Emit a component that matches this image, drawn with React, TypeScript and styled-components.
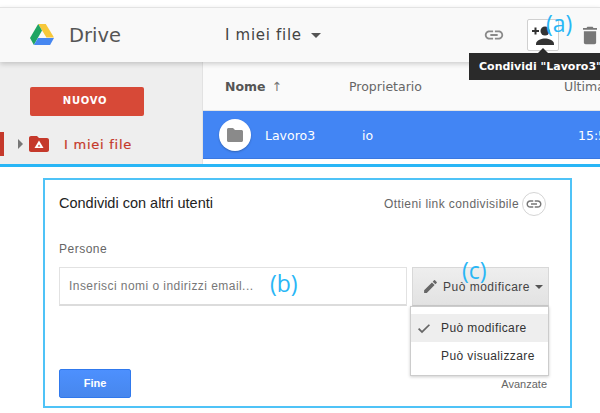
import React from "react";
import styled, { createGlobalStyle } from "styled-components";

const GlobalStyle = createGlobalStyle`
  html, body {
    margin: 0;
    padding: 0;
    background: #ffffff;
  }
  * {
    box-sizing: border-box;
  }
`;

const Page = styled.div`
  position: relative;
  width: 600px;
  height: 413px;
  overflow: hidden;
  background: #ffffff;
  font-family: "DejaVu Sans", sans-serif;
`;

const DriveShot = styled.section`
  position: relative;
  height: 164px;
  padding-top: 7px;
  overflow: hidden;
`;

const TopBar = styled.header`
  position: relative;
  z-index: 2;
  display: flex;
  align-items: center;
  height: 55px;
  padding-left: 30px;
  background: #f9f9f9;
  border-top: 1px solid #e3e3e3;
  box-shadow: 0 2px 5px rgba(0, 0, 0, 0.18);
`;

const Brand = styled.div`
  display: flex;
  align-items: center;
  gap: 15px;
  width: 195px;
  color: #555555;
  font-size: 19.5px;
`;

const FolderTitle = styled.div`
  display: flex;
  align-items: center;
  gap: 9px;
  flex: 1;
  color: #444444;
  font-size: 15px;
  letter-spacing: 0.7px;
`;

const Caret = styled.span`
  width: 0;
  height: 0;
  border-left: 5px solid transparent;
  border-right: 5px solid transparent;
  border-top: 5px solid #555555;
`;

const Tools = styled.div`
  display: flex;
  align-items: center;
  flex: none;
  width: 117px;
`;

const LinkTool = styled.div`
  display: flex;
  width: 23px;
`;

const ShareTool = styled.div`
  display: flex;
  align-items: center;
  justify-content: center;
  width: 32px;
  height: 32px;
  margin-left: 21px;
  background: #ffffff;
  border: 1px solid #d0d0d0;
  border-radius: 2px;
`;

const TrashTool = styled.div`
  display: flex;
  margin-left: 24px;
`;

const Tooltip = styled.div`
  position: absolute;
  z-index: 3;
  top: 53px;
  left: 469px;
  width: 131px;
  height: 27px;
  padding-left: 10px;
  overflow: hidden;
  background: #2a2a2a;
  color: #ffffff;
  font-size: 11px;
  font-weight: 700;
  line-height: 27px;
  white-space: nowrap;
`;

const TooltipNotch = styled.span`
  position: absolute;
  z-index: 3;
  top: 48px;
  left: 538px;
  width: 0;
  height: 0;
  border-left: 5px solid transparent;
  border-right: 5px solid transparent;
  border-bottom: 5px solid #2a2a2a;
`;

const Body = styled.div`
  display: flex;
  height: 102px;
`;

const Sidebar = styled.aside`
  flex: none;
  width: 203px;
  padding-top: 25px;
  background: #eeeeee;
  border-right: 1px solid #e2e2e2;
`;

const NewButton = styled.div`
  width: 114px;
  height: 29px;
  margin-left: 30px;
  padding-right: 4px;
  background: #d74937;
  border-radius: 2px;
  color: #ffffff;
  font-size: 10px;
  font-weight: 700;
  line-height: 28px;
  letter-spacing: 0.7px;
  text-align: center;
`;

const NavRow = styled.div`
  display: flex;
  align-items: center;
  height: 24px;
  margin-top: 16px;
  color: #c5382a;
  font-size: 13px;
  letter-spacing: 0.75px;
  -webkit-text-stroke: 0.2px #c5382a;
`;

const NavMark = styled.span`
  width: 4px;
  height: 24px;
  background: #c5392b;
`;

const NavArrow = styled.span`
  width: 0;
  height: 0;
  margin-left: 14px;
  border-top: 5px solid transparent;
  border-bottom: 5px solid transparent;
  border-left: 5px solid #777777;
`;

const NavIcon = styled.span`
  display: flex;
  margin-left: 6px;
  margin-right: 15px;
`;

const Listing = styled.main`
  flex: 1;
  min-width: 0;
  background: #ffffff;
`;

const ColumnHead = styled.div`
  display: grid;
  grid-template-columns: 124px 215px 1fr;
  align-items: center;
  height: 49px;
  padding: 0 0 0 22px;
  background: #fafafa;
  border-bottom: 1px solid #e4e4e4;
  color: #666666;
  font-size: 12.5px;
  white-space: nowrap;
`;

const NameHead = styled.span`
  display: flex;
  gap: 6px;
  color: #555555;
  font-size: 12.5px;
  font-weight: 700;
`;

const SortArrow = styled.span`
  color: #777777;
  font-weight: 400;
`;

const SelectedRow = styled.div`
  display: grid;
  grid-template-columns: 46px 97px 216px 1fr;
  align-items: center;
  height: 48px;
  padding-left: 16px;
  background: #4285f4;
  border-bottom: 1px solid #3b78e0;
  color: #ffffff;
  font-size: 12.5px;
  white-space: nowrap;
`;

const RowCell = styled.span`
  padding-top: 1px;
`;

const FolderBadge = styled.span`
  display: flex;
  align-items: center;
  justify-content: center;
  width: 32px;
  height: 32px;
  background: #ffffff;
  border-radius: 50%;
  box-shadow: 0 1px 2px rgba(0, 0, 0, 0.25);
`;

const Divider = styled.div`
  height: 3px;
  background: #29b6f6;
`;

const DialogArea = styled.section`
  padding: 11px 28px 0 43px;
`;

const Dialog = styled.div`
  display: flex;
  flex-direction: column;
  height: 230px;
  padding: 11px 24px 0 14px;
  border: 2px solid #4fc3f7;
  font-family: "Liberation Sans", Arial, sans-serif;
`;

const DialogHead = styled.div`
  display: flex;
  align-items: center;
  justify-content: space-between;
  height: 24px;
`;

const DialogTitle = styled.h2`
  margin: 0;
  color: #222222;
  font-size: 14.5px;
  font-weight: 400;
`;

const LinkAction = styled.div`
  display: flex;
  align-items: center;
  gap: 3px;
  margin-top: 2px;
  color: #666666;
  font-size: 12px;
  letter-spacing: 0.42px;
`;

const RoundIcon = styled.span`
  display: flex;
  align-items: center;
  justify-content: center;
  width: 24px;
  height: 24px;
  border: 1px solid #d5d5d5;
  border-radius: 50%;
`;

const FieldLabel = styled.div`
  margin-top: 26px;
  color: #666666;
  font-size: 12px;
  letter-spacing: 0.5px;
  line-height: 16px;
`;

const FieldRow = styled.div`
  display: flex;
  gap: 5px;
  margin-top: 10px;
`;

const PeopleInput = styled.div`
  flex: none;
  width: 348px;
  height: 39px;
  padding-left: 9px;
  background: #ffffff;
  border: 1px solid #e2e2e2;
  border-bottom: 2px solid #dcdcdc;
  color: #777777;
  font-size: 12px;
  letter-spacing: 0.45px;
  line-height: 36px;
`;

const RoleButton = styled.div`
  display: flex;
  align-items: center;
  flex: none;
  width: 137px;
  height: 39px;
  padding-left: 9px;
  background: linear-gradient(#eeeeee, #e2e2e2);
  border: 1px solid #d8d8d8;
  border-bottom-color: #cccccc;
  color: #444444;
  font-size: 12px;
  letter-spacing: 0.5px;
`;

const RoleLabel = styled.span`
  margin-left: 4px;
  margin-right: 5px;
`;

const SmallCaret = styled.span`
  width: 0;
  height: 0;
  border-left: 4px solid transparent;
  border-right: 4px solid transparent;
  border-top: 4px solid #555555;
`;

const RoleMenu = styled.ul`
  position: absolute;
  z-index: 2;
  top: 306px;
  left: 410px;
  width: 139px;
  height: 70px;
  margin: 0;
  padding: 7px 0 0;
  list-style: none;
  background: #ffffff;
  border: 1px solid #cccccc;
  box-shadow: 0 1px 3px rgba(0, 0, 0, 0.2);
  font-family: "Liberation Sans", Arial, sans-serif;
`;

const RoleOption = styled.li<{ $active?: boolean }>`
  display: flex;
  align-items: center;
  height: 28px;
  padding-left: 5px;
  background: ${(p) => (p.$active ? "#eeeeee" : "transparent")};
  color: #333333;
  font-size: 12px;
  letter-spacing: 0.4px;
`;

const CheckSlot = styled.span`
  display: flex;
  width: 25px;
`;

const DialogFoot = styled.div`
  display: flex;
  align-items: flex-end;
  justify-content: space-between;
  flex: 1;
  padding-bottom: 8px;
`;

const DoneButton = styled.div`
  width: 72px;
  height: 29px;
  background: linear-gradient(#4d90fe, #4787ed);
  border: 1px solid #3079ed;
  border-radius: 2px;
  color: #ffffff;
  font-size: 11px;
  font-weight: 700;
  line-height: 27px;
  text-align: center;
`;

const AdvancedLink = styled.span`
  margin-right: -1px;
  margin-bottom: 8px;
  color: #666666;
  font-size: 11px;
`;

const Callout = styled.span`
  position: absolute;
  z-index: 4;
  color: #29b6f6;
  font-family: "Open Sans", sans-serif;
  font-size: 23px;
  font-weight: 400;
  line-height: 24px;
`;

const CalloutA = styled(Callout)`
  top: 11px;
  left: 546px;
`;

const CalloutB = styled(Callout)`
  top: 271px;
  left: 270px;
`;

const CalloutC = styled(Callout)`
  top: 258px;
  left: 462px;
`;

const LinkIcon = ({ size, color }: { size: number; color: string }) => (
  <svg width={size} height={size} viewBox="0 0 24 24" fill={color}>
    <path d="M3.9 12c0-1.71 1.39-3.1 3.1-3.1h4V7H7c-2.76 0-5 2.24-5 5s2.24 5 5 5h4v-1.9H7c-1.71 0-3.1-1.39-3.1-3.1zM8 13h8v-2H8v2zm9-6h-4v1.9h4c1.71 0 3.1 1.39 3.1 3.1s-1.39 3.1-3.1 3.1h-4V17h4c2.76 0 5-2.24 5-5s-2.24-5-5-5z" />
  </svg>
);

const DriveLogo = () => (
  <svg width="24" height="22" viewBox="0 0 24 22">
    <path d="M8.2 0h7.600l8.200 13.600h-7.600z" fill="#f7c83a" />
    <path d="M8.2 0l3.800 6.600L3.900 21 0 14z" fill="#1fa463" />
    <path d="M8 14h16l-3.900 7H3.900z" fill="#4687f1" />
  </svg>
);

export default function App() {
  return (
    <Page>
      <GlobalStyle />
      <DriveShot>
        <TopBar>
          <Brand>
            <DriveLogo />
            <span>Drive</span>
          </Brand>
          <FolderTitle>
            I miei file
            <Caret />
          </FolderTitle>
          <Tools>
            <LinkTool>
              <LinkIcon size={22} color="#8a8a8a" />
            </LinkTool>
            <ShareTool>
              <svg width="26" height="26" viewBox="0 0 26 26" fill="#333333">
                <circle cx="15" cy="9" r="4.500" />
                <path d="M6 22c0-4 6-5.500 9-5.500s9 1.500 9 5.500v1H6z" />
                <path d="M2 8h2.500V5.500h2V8H9v2H6.500v2.500h-2V10H2z" />
              </svg>
            </ShareTool>
            <TrashTool>
              <svg width="14" height="19" viewBox="0 0 16 20" fill="#777777">
                <path d="M1 5h14v13c0 1.100-.9 2-2 2H3c-1.100 0-2-.9-2-2z" />
                <path d="M5 0h6l1 1.500h4V3.500H0V1.500h4z" />
              </svg>
            </TrashTool>
          </Tools>
        </TopBar>
        <TooltipNotch />
        <Tooltip>Condividi "Lavoro3"</Tooltip>
        <Body>
          <Sidebar>
            <NewButton>NUOVO</NewButton>
            <NavRow>
              <NavMark />
              <NavArrow />
              <NavIcon>
                <svg width="20" height="16" viewBox="0 0 20 16">
                  <path d="M2 0h6l2 2h8c1.100 0 2 .9 2 2v10c0 1.100-.9 2-2 2H2c-1.100 0-2-.9-2-2V2C0 .9.900 0 2 0z" fill="#c5392b" />
                  <path d="M10 4.500l4.500 7.500h-9z" fill="#ffffff" />
                  <path d="M10 8.500l1.300 2h-2.600z" fill="#c5392b" />
                </svg>
              </NavIcon>
              I miei file
            </NavRow>
          </Sidebar>
          <Listing>
            <ColumnHead>
              <NameHead>
                Nome <SortArrow>↑</SortArrow>
              </NameHead>
              <span>Proprietario</span>
              <span>Ultima</span>
            </ColumnHead>
            <SelectedRow>
              <FolderBadge>
                <svg width="16" height="14" viewBox="0 0 16 14" fill="#8a8a8a">
                  <path d="M1.500 0h4.500l2 2h6.500c.8 0 1.500.7 1.500 1.500v9c0 .8-.7 1.500-1.500 1.500h-13C.7 14 0 13.300 0 12.500v-11C0 .7.700 0 1.500 0z" />
                </svg>
              </FolderBadge>
              <RowCell>Lavoro3</RowCell>
              <RowCell>io</RowCell>
              <RowCell>15:5</RowCell>
            </SelectedRow>
          </Listing>
        </Body>
      </DriveShot>
      <Divider />
      <DialogArea>
        <Dialog>
          <DialogHead>
            <DialogTitle>Condividi con altri utenti</DialogTitle>
            <LinkAction>
              Ottieni link condivisibile
              <RoundIcon>
                <LinkIcon size={18} color="#777777" />
              </RoundIcon>
            </LinkAction>
          </DialogHead>
          <FieldLabel>Persone</FieldLabel>
          <FieldRow>
            <PeopleInput>Inserisci nomi o indirizzi email...</PeopleInput>
            <RoleButton>
              <svg width="17" height="17" viewBox="0 0 24 24" fill="#666666">
                <path d="M3 17.250V21h3.750L17.810 9.940l-3.750-3.750L3 17.250zM20.710 7.040a1 1 0 0 0 0-1.410l-2.340-2.340a1 1 0 0 0-1.410 0l-1.830 1.830 3.750 3.750 1.830-1.830z" />
              </svg>
              <RoleLabel>Può modificare</RoleLabel>
              <SmallCaret />
            </RoleButton>
          </FieldRow>
          <DialogFoot>
            <DoneButton>Fine</DoneButton>
            <AdvancedLink>Avanzate</AdvancedLink>
          </DialogFoot>
        </Dialog>
      </DialogArea>
      <RoleMenu>
        <RoleOption $active>
          <CheckSlot>
            <svg width="16" height="16" viewBox="0 0 24 24" fill="#666666">
              <path d="M9 16.200L4.800 12l-1.800 1.800L9 20 21 8l-1.800-1.800z" />
            </svg>
          </CheckSlot>
          Può modificare
        </RoleOption>
        <RoleOption>
          <CheckSlot />
          Può visualizzare
        </RoleOption>
      </RoleMenu>
      <CalloutA>(a)</CalloutA>
      <CalloutB>(b)</CalloutB>
      <CalloutC>(c)</CalloutC>
    </Page>
  );
}
